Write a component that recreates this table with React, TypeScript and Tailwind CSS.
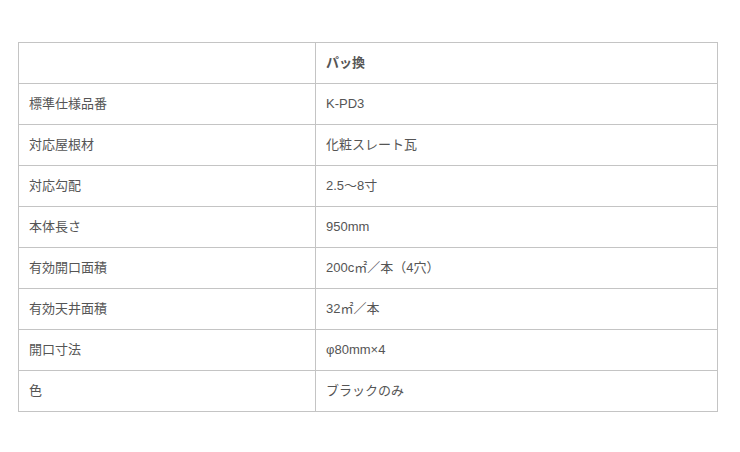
const rows: [string, string][] = [
  ['標準仕様品番', 'K-PD3'],
  ['対応屋根材', '化粧スレート瓦'],
  ['対応勾配', '2.5〜8寸'],
  ['本体長さ', '950mm'],
  ['有効開口面積', '200c㎡／本（4穴）'],
  ['有効天井面積', '32㎡／本'],
  ['開口寸法', 'φ80mm×4'],
  ['色', 'ブラックのみ'],
]

export default function App() {
  return (
    <main
      className="min-h-[452px] w-[740px] bg-white pt-[42px] pl-[18px] text-[13px] text-[#555]"
      style={{ fontFamily: '"Liberation Sans", "Noto Sans CJK JP", sans-serif' }}
    >
      <table className="w-[700px] table-fixed border-collapse">
        <colgroup>
          <col className="w-[297px]" />
          <col />
        </colgroup>
        <thead>
          <tr className="h-[41px]">
            <th className="border border-[#c4c4c4]" />
            <th className="border border-[#c4c4c4] px-[10px] text-left font-bold">パッ換</th>
          </tr>
        </thead>
        <tbody>
          {rows.map(([label, value]) => (
            <tr key={label} className="h-[41px]">
              <td className="border border-[#c4c4c4] px-[10px]">{label}</td>
              <td className="border border-[#c4c4c4] px-[10px]">{value}</td>
            </tr>
          ))}
        </tbody>
      </table>
    </main>
  )
}
